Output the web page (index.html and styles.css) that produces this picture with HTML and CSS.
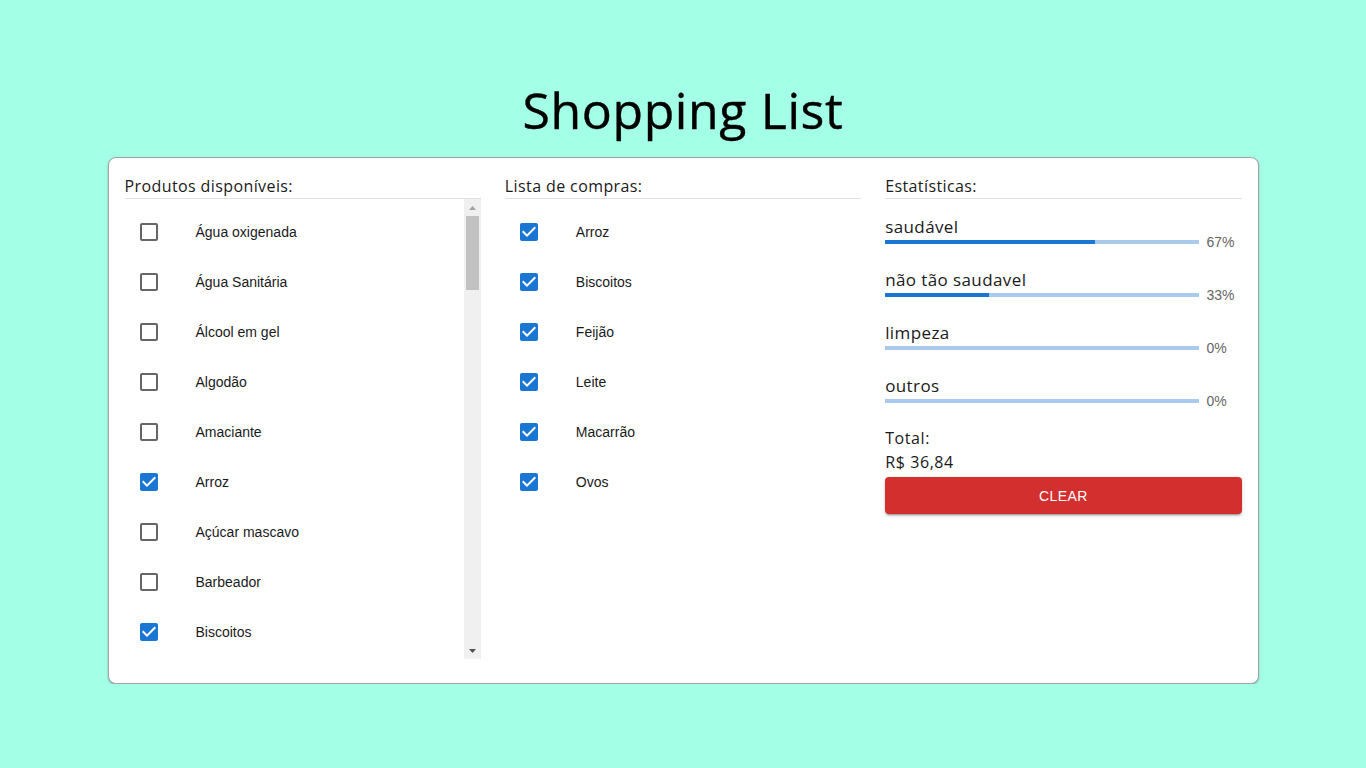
FILE: index.html
```html
<!DOCTYPE html>
<html lang="pt-BR">
<head>
<meta charset="utf-8">
<title>Shopping List</title>
<link rel="stylesheet" href="styles.css">
</head>
<body>
<main class="page">
  <h1 class="title">Shopping List</h1>
  <section class="card">
    <div class="column">
      <h2 class="col-title">Produtos disponíveis:</h2>
      <div class="scroll-wrap">
        <ul class="list">
          <li class="item"><span class="cb"><svg viewBox="0 0 24 24"><path d="M19 5v14H5V5h14m0-2H5c-1.1 0-2 .9-2 2v14c0 1.1.9 2 2 2h14c1.1 0 2-.9 2-2V5c0-1.1-.9-2-2-2z"/></svg></span><span class="label">Água oxigenada</span></li>
          <li class="item"><span class="cb"><svg viewBox="0 0 24 24"><path d="M19 5v14H5V5h14m0-2H5c-1.1 0-2 .9-2 2v14c0 1.1.9 2 2 2h14c1.1 0 2-.9 2-2V5c0-1.1-.9-2-2-2z"/></svg></span><span class="label">Água Sanitária</span></li>
          <li class="item"><span class="cb"><svg viewBox="0 0 24 24"><path d="M19 5v14H5V5h14m0-2H5c-1.1 0-2 .9-2 2v14c0 1.1.9 2 2 2h14c1.1 0 2-.9 2-2V5c0-1.1-.9-2-2-2z"/></svg></span><span class="label">Álcool em gel</span></li>
          <li class="item"><span class="cb"><svg viewBox="0 0 24 24"><path d="M19 5v14H5V5h14m0-2H5c-1.1 0-2 .9-2 2v14c0 1.1.9 2 2 2h14c1.1 0 2-.9 2-2V5c0-1.1-.9-2-2-2z"/></svg></span><span class="label">Algodão</span></li>
          <li class="item"><span class="cb"><svg viewBox="0 0 24 24"><path d="M19 5v14H5V5h14m0-2H5c-1.1 0-2 .9-2 2v14c0 1.1.9 2 2 2h14c1.1 0 2-.9 2-2V5c0-1.1-.9-2-2-2z"/></svg></span><span class="label">Amaciante</span></li>
          <li class="item"><span class="cb checked"><svg viewBox="0 0 24 24"><path d="M19 3H5c-1.11 0-2 .9-2 2v14c0 1.1.89 2 2 2h14c1.11 0 2-.9 2-2V5c0-1.1-.89-2-2-2zm-9 14l-5-5 1.41-1.41L10 14.17l7.59-7.59L19 8l-9 9z"/></svg></span><span class="label">Arroz</span></li>
          <li class="item"><span class="cb"><svg viewBox="0 0 24 24"><path d="M19 5v14H5V5h14m0-2H5c-1.1 0-2 .9-2 2v14c0 1.1.9 2 2 2h14c1.1 0 2-.9 2-2V5c0-1.1-.9-2-2-2z"/></svg></span><span class="label">Açúcar mascavo</span></li>
          <li class="item"><span class="cb"><svg viewBox="0 0 24 24"><path d="M19 5v14H5V5h14m0-2H5c-1.1 0-2 .9-2 2v14c0 1.1.9 2 2 2h14c1.1 0 2-.9 2-2V5c0-1.1-.9-2-2-2z"/></svg></span><span class="label">Barbeador</span></li>
          <li class="item"><span class="cb checked"><svg viewBox="0 0 24 24"><path d="M19 3H5c-1.11 0-2 .9-2 2v14c0 1.1.89 2 2 2h14c1.11 0 2-.9 2-2V5c0-1.1-.89-2-2-2zm-9 14l-5-5 1.41-1.41L10 14.17l7.59-7.59L19 8l-9 9z"/></svg></span><span class="label">Biscoitos</span></li>
        </ul>
        <div class="scrollbar" aria-hidden="true">
          <div class="sb-btn"><svg width="7" height="4" viewBox="0 0 7 4"><polygon points="3.5,0 7,4 0,4" fill="#a3a3a3"/></svg></div>
          <div class="sb-thumb"></div>
          <div class="sb-spacer"></div>
          <div class="sb-btn"><svg width="7" height="4" viewBox="0 0 7 4"><polygon points="0,0 7,0 3.5,4" fill="#505050"/></svg></div>
        </div>
      </div>
    </div>

    <div class="column">
      <h2 class="col-title">Lista de compras:</h2>
      <ul class="list">
        <li class="item"><span class="cb checked"><svg viewBox="0 0 24 24"><path d="M19 3H5c-1.11 0-2 .9-2 2v14c0 1.1.89 2 2 2h14c1.11 0 2-.9 2-2V5c0-1.1-.89-2-2-2zm-9 14l-5-5 1.41-1.41L10 14.17l7.59-7.59L19 8l-9 9z"/></svg></span><span class="label">Arroz</span></li>
        <li class="item"><span class="cb checked"><svg viewBox="0 0 24 24"><path d="M19 3H5c-1.11 0-2 .9-2 2v14c0 1.1.89 2 2 2h14c1.11 0 2-.9 2-2V5c0-1.1-.89-2-2-2zm-9 14l-5-5 1.41-1.41L10 14.17l7.59-7.59L19 8l-9 9z"/></svg></span><span class="label">Biscoitos</span></li>
        <li class="item"><span class="cb checked"><svg viewBox="0 0 24 24"><path d="M19 3H5c-1.11 0-2 .9-2 2v14c0 1.1.89 2 2 2h14c1.11 0 2-.9 2-2V5c0-1.1-.89-2-2-2zm-9 14l-5-5 1.41-1.41L10 14.17l7.59-7.59L19 8l-9 9z"/></svg></span><span class="label">Feijão</span></li>
        <li class="item"><span class="cb checked"><svg viewBox="0 0 24 24"><path d="M19 3H5c-1.11 0-2 .9-2 2v14c0 1.1.89 2 2 2h14c1.11 0 2-.9 2-2V5c0-1.1-.89-2-2-2zm-9 14l-5-5 1.41-1.41L10 14.17l7.59-7.59L19 8l-9 9z"/></svg></span><span class="label">Leite</span></li>
        <li class="item"><span class="cb checked"><svg viewBox="0 0 24 24"><path d="M19 3H5c-1.11 0-2 .9-2 2v14c0 1.1.89 2 2 2h14c1.11 0 2-.9 2-2V5c0-1.1-.89-2-2-2zm-9 14l-5-5 1.41-1.41L10 14.17l7.59-7.59L19 8l-9 9z"/></svg></span><span class="label">Macarrão</span></li>
        <li class="item"><span class="cb checked"><svg viewBox="0 0 24 24"><path d="M19 3H5c-1.11 0-2 .9-2 2v14c0 1.1.89 2 2 2h14c1.11 0 2-.9 2-2V5c0-1.1-.89-2-2-2zm-9 14l-5-5 1.41-1.41L10 14.17l7.59-7.59L19 8l-9 9z"/></svg></span><span class="label">Ovos</span></li>
      </ul>
    </div>

    <div class="column">
      <h2 class="col-title">Estatísticas:</h2>
      <div class="stats">
        <div class="stat">
          <div class="stat-label">saudável</div>
          <div class="stat-row">
            <div class="bar"><div class="bar-fill" style="width:67%"></div></div>
            <span class="pct">67%</span>
          </div>
        </div>
        <div class="stat">
          <div class="stat-label">não tão saudavel</div>
          <div class="stat-row">
            <div class="bar"><div class="bar-fill" style="width:33%"></div></div>
            <span class="pct">33%</span>
          </div>
        </div>
        <div class="stat">
          <div class="stat-label">limpeza</div>
          <div class="stat-row">
            <div class="bar"><div class="bar-fill" style="width:0%"></div></div>
            <span class="pct">0%</span>
          </div>
        </div>
        <div class="stat">
          <div class="stat-label">outros</div>
          <div class="stat-row">
            <div class="bar"><div class="bar-fill" style="width:0%"></div></div>
            <span class="pct">0%</span>
          </div>
        </div>
      </div>
      <div class="total-label">Total:</div>
      <div class="total-value">R$ 36,84</div>
      <button class="clear-btn" type="button">Clear</button>
    </div>
  </section>
</main>
</body>
</html>
```

FILE: styles.css
```css
* { box-sizing: border-box; }

html, body {
  margin: 0;
  padding: 0;
}

body {
  background: #a4ffe7;
  color: #000;
  font-family: "Liberation Sans", Arial, sans-serif;
}

.page {
  padding-top: 82px;
}

.title {
  margin: 0 0 19px;
  height: 56px;
  line-height: 56px;
  text-align: center;
  font-family: "Open Sans", sans-serif;
  font-weight: 400;
  font-size: 50px;
  letter-spacing: 0.6px;
  color: #000;
  -webkit-text-stroke: 0.4px #000;
}

.card {
  width: 1151px;
  margin: 0 auto;
  background: #fff;
  border: 1px solid #a3a3a3;
  border-radius: 8px;
  box-shadow: 0 1px 2px rgba(0, 0, 0, 0.3);
  padding: 16px 16px 24px;
  display: grid;
  grid-template-columns: repeat(3, 1fr);
  column-gap: 24px;
}

.column {
  min-width: 0;
  display: flex;
  flex-direction: column;
}

.col-title {
  margin: 0;
  height: 25px;
  line-height: 24px;
  font-family: "Open Sans", sans-serif;
  font-weight: 400;
  font-size: 16px;
  letter-spacing: 0.4px;
  color: #1a1a1a;
  border-bottom: 1px solid #e0e0e0;
  white-space: nowrap;
}

.scroll-wrap {
  display: flex;
  height: 460px;
}

.scroll-wrap .list {
  flex: 1;
  min-width: 0;
}

.list {
  list-style: none;
  margin: 0;
  padding: 8px 0;
  height: 460px;
  overflow: hidden;
}

.scrollbar {
  width: 17px;
  flex: none;
  background: #f0f0f0;
  display: flex;
  flex-direction: column;
}

.sb-btn {
  height: 17px;
  display: flex;
  align-items: center;
  justify-content: center;
}

.sb-btn svg {
  display: block;
}

.sb-thumb {
  height: 74px;
  margin: 0 2px;
  background: #c1c1c1;
}

.sb-spacer {
  flex: 1;
}

.item {
  height: 50px;
  display: flex;
  align-items: center;
  padding-left: 12px;
}

.cb {
  width: 59px;
  flex: none;
  display: flex;
  align-items: center;
}

.cb svg {
  width: 24px;
  height: 24px;
  fill: #666666;
}

.cb.checked svg {
  fill: #1976d2;
}

.label {
  font-size: 14px;
  color: #1a1a1a;
  white-space: nowrap;
}

.stats {
  margin-top: 19px;
  display: flex;
  flex-direction: column;
  gap: 23px;
}

.stat-label {
  height: 18px;
  line-height: 18px;
  font-family: "Open Sans", sans-serif;
  font-weight: 400;
  font-size: 17px;
  letter-spacing: 0.4px;
  color: #1a1a1a;
  white-space: nowrap;
}

.stat-row {
  height: 12px;
  display: flex;
  align-items: center;
}

.bar {
  flex: 1;
  height: 4px;
  background: #a7caed;
  overflow: hidden;
}

.bar-fill {
  height: 100%;
  background: #1976d2;
}

.pct {
  width: 35px;
  margin-left: 8px;
  font-size: 14px;
  line-height: 12px;
  color: #666666;
}

.total-label,
.total-value {
  height: 24px;
  line-height: 24px;
  font-family: "Open Sans", sans-serif;
  font-weight: 400;
  font-size: 16px;
  letter-spacing: 0.6px;
  color: #1a1a1a;
}

.total-label {
  margin-top: 19px;
}

.clear-btn {
  margin-top: 3px;
  height: 37px;
  width: 100%;
  border: 0;
  border-radius: 4px;
  background: #d32f2f;
  color: #fff;
  font-family: "Liberation Sans", Arial, sans-serif;
  font-size: 14px;
  letter-spacing: 0.4px;
  text-transform: uppercase;
  box-shadow: 0 3px 1px -2px rgba(0, 0, 0, 0.2), 0 2px 2px 0 rgba(0, 0, 0, 0.14), 0 1px 5px 0 rgba(0, 0, 0, 0.12);
  cursor: pointer;
}
```
